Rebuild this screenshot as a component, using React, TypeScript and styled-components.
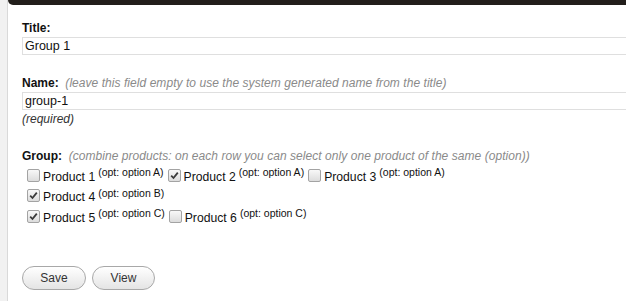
import React from 'react'
import styled, { createGlobalStyle } from 'styled-components'

const GlobalStyle = createGlobalStyle`
  html, body {
    margin: 0;
    padding: 0;
    background: #fff;
  }
  body {
    font-family: "Liberation Sans", Arial, sans-serif;
    color: #111;
  }
`

const Page = styled.div`
  display: flex;
  width: 626px;
  height: 301px;
  overflow: hidden;
`

const Rail = styled.div`
  width: 7px;
  flex: none;
  background: #f1f1f1;
  border-right: 1px solid #d9d9d9;
`

const Main = styled.div`
  flex: 1;
  min-width: 0;
  display: flex;
  flex-direction: column;
`

const TopBar = styled.div`
  height: 5px;
  background: #221e1b;
  border-bottom-left-radius: 5px;
`

const Form = styled.form`
  padding: 16px 0 0 14px;
  display: flex;
  flex-direction: column;
`

const Label = styled.div<{ $gap?: number }>`
  margin-top: ${p => p.$gap ?? 0}px;
  font-size: 12px;
  line-height: 14px;
  font-weight: bold;
  color: #111;
  white-space: nowrap;
`

const Hint = styled.span`
  font-weight: normal;
  font-style: italic;
  color: #8a8a8a;
  letter-spacing: 0.05px;
`

const TextField = styled.input`
  margin-top: 2px;
  width: 640px;
  height: 18px;
  box-sizing: border-box;
  border: 1px solid #dfdfdf;
  padding: 0 2px;
  font-family: "Liberation Sans", Arial, sans-serif;
  font-size: 12.5px;
  color: #111;
  outline: none;
  background: #fff;
`

const Note = styled.div`
  margin-top: 2px;
  font-size: 12px;
  line-height: 14px;
  font-style: italic;
  color: #333;
`

const Products = styled.div`
  margin-top: 2px;
  display: flex;
  flex-direction: column;
`

const Row = styled.div`
  height: 20.5px;
  display: flex;
  align-items: center;
  padding-left: 5px;
`

const Item = styled.label`
  display: flex;
  align-items: center;
  margin-right: 4px;
  white-space: nowrap;
`

const Box = styled.span<{ $on: boolean }>`
  width: 11px;
  height: 11px;
  border: 1px solid #a3a3a3;
  border-radius: 2px;
  background: linear-gradient(#f8f8f8, #dcdcdc);
  display: flex;
  align-items: center;
  justify-content: center;
  margin-right: 3px;
  flex: none;
`

const Name = styled.span`
  font-size: 12.2px;
  line-height: 14px;
  color: #111;
  padding-top: 3px;
`

const Opt = styled.sup`
  font-size: 10.5px;
  line-height: 10px;
  margin-left: 3px;
  position: relative;
  top: -3px;
  vertical-align: baseline;
  color: #111;
`

const Buttons = styled.div`
  margin-top: 39px;
  display: flex;
  gap: 6px;
`

const Button = styled.button<{ $w: number }>`
  height: 24px;
  width: ${p => p.$w}px;
  border: 1px solid #a8a8a8;
  border-radius: 12px;
  background: linear-gradient(#ffffff, #e4e4e4);
  font-family: "Liberation Sans", Arial, sans-serif;
  font-size: 12px;
  color: #333;
  padding: 0;
`

const Check = () => (
  <svg width="9" height="9" viewBox="0 0 9 9">
    <path d="M1.2 4.6 L3.5 7 L7.8 1.6" fill="none" stroke="#3a3a3a" strokeWidth="1.8" />
  </svg>
)

type Product = { name: string; opt: string; on: boolean }

const rows: Product[][] = [
  [
    { name: 'Product 1', opt: 'option A', on: false },
    { name: 'Product 2', opt: 'option A', on: true },
    { name: 'Product 3', opt: 'option A', on: false },
  ],
  [{ name: 'Product 4', opt: 'option B', on: true }],
  [
    { name: 'Product 5', opt: 'option C', on: true },
    { name: 'Product 6', opt: 'option C', on: false },
  ],
]

export default function App() {
  return (
    <>
      <GlobalStyle />
      <Page>
        <Rail />
        <Main>
          <TopBar />
          <Form onSubmit={e => e.preventDefault()}>
            <Label>Title:</Label>
            <TextField defaultValue="Group 1" />

            <Label $gap={21}>
              Name:&nbsp;&nbsp;<Hint>(leave this field empty to use the system generated name from the title)</Hint>
            </Label>
            <TextField defaultValue="group-1" />
            <Note>(required)</Note>

            <Label $gap={23}>
              Group:&nbsp;&nbsp;<Hint>(combine products: on each row you can select only one product of the same (option))</Hint>
            </Label>
            <Products>
              {rows.map((row, i) => (
                <Row key={i}>
                  {row.map(p => (
                    <Item key={p.name}>
                      <Box $on={p.on}>{p.on ? <Check /> : null}</Box>
                      <Name>{p.name}</Name>
                      <Opt>(opt: {p.opt})</Opt>
                    </Item>
                  ))}
                </Row>
              ))}
            </Products>

            <Buttons>
              <Button type="button" $w={64}>Save</Button>
              <Button type="button" $w={63}>View</Button>
            </Buttons>
          </Form>
        </Main>
      </Page>
    </>
  )
}
